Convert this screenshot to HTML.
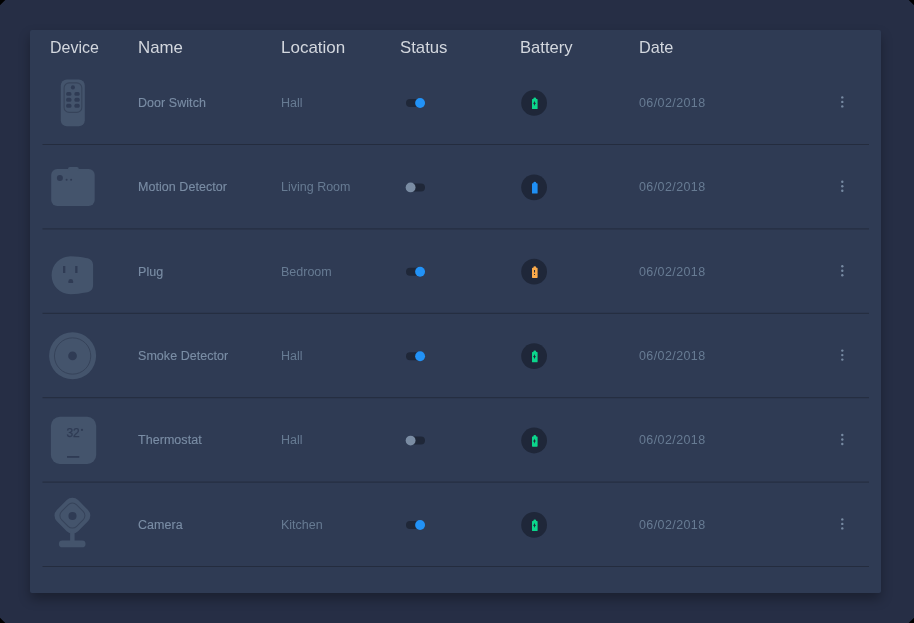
<!DOCTYPE html>
<html><head><meta charset="utf-8">
<style>
html,body{margin:0;padding:0;width:914px;height:623px;overflow:hidden;background:#000;}
*{box-sizing:border-box;}
.frame{will-change:transform;position:absolute;left:0;top:0;width:914px;height:623px;background:#262e45;clip-path:polygon(5.3px 0,908.7px 0,914px 5.3px,914px 617.7px,908.7px 623px,5.3px 623px,0 617.7px,0 5.3px);font-family:"Liberation Sans",sans-serif;}
.card{position:absolute;left:30px;top:30px;width:851px;height:563px;background:#2f3b54;border-radius:2px;box-shadow:0 6px 12px rgba(0,0,0,0.3);}
.h{position:absolute;top:38.3px;font-size:17px;color:#d3d7de;line-height:20px;white-space:nowrap;transform-origin:0 0;}
.t{position:absolute;font-size:12.5px;line-height:14px;white-space:nowrap;}
.nm{color:#7a8da5;letter-spacing:0.05px;-webkit-text-stroke:0.12px #7a8da5;}
.lc{color:#677b93;}
.dt{color:#677b93;letter-spacing:0.4px;}
.ic{position:absolute;left:0;top:0;}
</style></head><body>
<div class="frame">
<div class="card"></div>
<div class="h" style="left:50px;transform:scaleX(0.94)">Device</div>
<div class="h" style="left:138px;transform:scaleX(0.99)">Name</div>
<div class="h" style="left:281px;transform:scaleX(1.0)">Location</div>
<div class="h" style="left:400px;transform:scaleX(0.985)">Status</div>
<div class="h" style="left:520px;transform:scaleX(0.977)">Battery</div>
<div class="h" style="left:639px;transform:scaleX(0.957)">Date</div>
<svg class="ic" width="914" height="623" viewBox="0 0 914 623">
 <rect x="42.5" y="144.00" width="826.5" height="1" fill="#242c3e"/>
 <rect x="42.5" y="228.40" width="826.5" height="1" fill="#242c3e"/>
 <rect x="42.5" y="312.80" width="826.5" height="1" fill="#242c3e"/>
 <rect x="42.5" y="397.20" width="826.5" height="1" fill="#242c3e"/>
 <rect x="42.5" y="481.60" width="826.5" height="1" fill="#242c3e"/>
 <rect x="42.5" y="566.00" width="826.5" height="1" fill="#242c3e"/>
 <g fill="#44546c">
  <rect x="60.8" y="79.5" width="24" height="46.7" rx="6"/>
  <rect x="64.1" y="82.9" width="17.7" height="29.5" rx="5" fill="none" stroke="#36435a" stroke-width="1.1"/>
  <g fill="#2f3b54">
   <circle cx="72.9" cy="87.4" r="2.05"/>
   <rect x="66.2" y="91.9" width="5.2" height="3.95" rx="1.5"/>
   <rect x="74.45" y="91.9" width="5.2" height="3.95" rx="1.5"/>
   <rect x="66.2" y="97.85" width="5.2" height="3.95" rx="1.5"/>
   <rect x="74.45" y="97.85" width="5.2" height="3.95" rx="1.5"/>
   <rect x="66.2" y="103.8" width="5.2" height="3.95" rx="1.5"/>
   <rect x="74.45" y="103.8" width="5.2" height="3.95" rx="1.5"/>
  </g>
  <rect x="51.2" y="169" width="43.5" height="37" rx="6"/>
  <rect x="68" y="167" width="10.8" height="4" rx="2"/>
  <g fill="#2f3b54">
   <circle cx="59.9" cy="178" r="3"/>
   <circle cx="66.6" cy="179.7" r="1"/>
   <circle cx="71.1" cy="179.7" r="1"/>
  </g>
  <path d="M70.6 256.2 C60.1 256.2 51.6 264.7 51.6 275.2 C51.6 285.7 60.1 294.2 70.6 294.2 C76 294.2 81 293.3 86 292.5 C90.5 291.8 93.1 289.5 93.1 285 L93.1 265.4 C93.1 260.9 90.5 258.6 86 257.9 C81 257.1 76 256.2 70.6 256.2 Z"/>
  <g fill="#2f3b54">
   <rect x="63" y="266" width="2.3" height="7" />
   <rect x="75.2" y="266" width="2.3" height="7" />
   <path d="M68.4 283 L68.4 281.3 A2.35 2.35 0 0 1 73.1 281.3 L73.1 283 Z"/>
  </g>
  <circle cx="72.6" cy="355.8" r="23.5"/>
  <circle cx="72.6" cy="356" r="18.15" fill="none" stroke="#36435a" stroke-width="1"/>
  <circle cx="72.55" cy="355.95" r="4.35" fill="#2f3b54"/>
  <rect x="50.9" y="416.8" width="45.3" height="47.2" rx="9"/>
  <rect x="67" y="456" width="12.3" height="1.8" fill="#2f3b54"/>
  <g transform="translate(72.4 515.6) rotate(45)">
   <rect x="-15" y="-15" width="30" height="30" rx="8"/>
   <rect x="-10.6" y="-10.6" width="21.2" height="21.2" rx="6" fill="none" stroke="#36435a" stroke-width="1"/>
  </g>
  <circle cx="72.5" cy="516" r="4.05" fill="#2f3b54"/>
  <rect x="70.1" y="531" width="4.5" height="11"/>
  <rect x="58.9" y="540.6" width="26.6" height="6.7" rx="3.35"/>
 </g>
 <text x="66.4" y="436.8" font-family="Liberation Sans" font-size="12" fill="#2f3b54" stroke="#2f3b54" stroke-width="0.25">32</text>
 <circle cx="82" cy="429.9" r="1.05" fill="#2f3b54"/>
 <g transform="translate(0 0.00)">
  <rect x="406" y="99" width="19" height="8" rx="4" fill="#1f2738"/>
  <circle cx="420.1" cy="103" r="4.95" fill="#2292f6"/>
  <circle cx="534.1" cy="102.9" r="12.9" fill="#1f2739"/>
  <path fill="#0bd68c" d="M532.6 98.9h0.8v-0.5q0 -1 1.4 -1q1.4 0 1.4 1v0.5h0.8q0.6 0 0.6 0.6v9q0 0.6 -0.6 0.6h-4.4q-0.6 0 -0.6 -0.6v-9q0 -0.6 0.6 -0.6z"/>
  <path fill="#1f2739" d="M534.45 100.8Q534.7 103.1 535.95 103.45Q534.7 103.8 534.45 106.1Q534.2 103.8 533.1 103.35Q534.2 103.1 534.45 100.8Z"/>
  <g fill="#778aa2"><circle cx="842.3" cy="97.4" r="1.2"/><circle cx="842.3" cy="101.9" r="1.2"/><circle cx="842.3" cy="106.4" r="1.2"/></g>
 </g>
 <g transform="translate(0 84.40)">
  <rect x="406" y="99" width="19" height="8" rx="4" fill="#1f2738"/>
  <circle cx="410.6" cy="103" r="4.95" fill="#7a8ca3"/>
  <circle cx="534.1" cy="102.9" r="12.9" fill="#1f2739"/>
  <path fill="#1f8ff4" d="M532.6 98.9h0.8v-0.5q0 -1 1.4 -1q1.4 0 1.4 1v0.5h0.8q0.6 0 0.6 0.6v9q0 0.6 -0.6 0.6h-4.4q-0.6 0 -0.6 -0.6v-9q0 -0.6 0.6 -0.6z"/>
  <g fill="#778aa2"><circle cx="842.3" cy="97.4" r="1.2"/><circle cx="842.3" cy="101.9" r="1.2"/><circle cx="842.3" cy="106.4" r="1.2"/></g>
 </g>
 <g transform="translate(0 168.80)">
  <rect x="406" y="99" width="19" height="8" rx="4" fill="#1f2738"/>
  <circle cx="420.1" cy="103" r="4.95" fill="#2292f6"/>
  <circle cx="534.1" cy="102.9" r="12.9" fill="#1f2739"/>
  <path fill="#fbaa4a" d="M532.6 98.9h0.8v-0.5q0 -1 1.4 -1q1.4 0 1.4 1v0.5h0.8q0.6 0 0.6 0.6v9q0 0.6 -0.6 0.6h-4.4q-0.6 0 -0.6 -0.6v-9q0 -0.6 0.6 -0.6z"/>
  <path fill="#1f2739" d="M534.05 101.1h1v2.6h-1zM534.05 105.2h1v1h-1z"/>
  <g fill="#778aa2"><circle cx="842.3" cy="97.4" r="1.2"/><circle cx="842.3" cy="101.9" r="1.2"/><circle cx="842.3" cy="106.4" r="1.2"/></g>
 </g>
 <g transform="translate(0 253.20)">
  <rect x="406" y="99" width="19" height="8" rx="4" fill="#1f2738"/>
  <circle cx="420.1" cy="103" r="4.95" fill="#2292f6"/>
  <circle cx="534.1" cy="102.9" r="12.9" fill="#1f2739"/>
  <path fill="#0bd68c" d="M532.6 98.9h0.8v-0.5q0 -1 1.4 -1q1.4 0 1.4 1v0.5h0.8q0.6 0 0.6 0.6v9q0 0.6 -0.6 0.6h-4.4q-0.6 0 -0.6 -0.6v-9q0 -0.6 0.6 -0.6z"/>
  <path fill="#1f2739" d="M534.45 100.8Q534.7 103.1 535.95 103.45Q534.7 103.8 534.45 106.1Q534.2 103.8 533.1 103.35Q534.2 103.1 534.45 100.8Z"/>
  <g fill="#778aa2"><circle cx="842.3" cy="97.4" r="1.2"/><circle cx="842.3" cy="101.9" r="1.2"/><circle cx="842.3" cy="106.4" r="1.2"/></g>
 </g>
 <g transform="translate(0 337.60)">
  <rect x="406" y="99" width="19" height="8" rx="4" fill="#1f2738"/>
  <circle cx="410.6" cy="103" r="4.95" fill="#7a8ca3"/>
  <circle cx="534.1" cy="102.9" r="12.9" fill="#1f2739"/>
  <path fill="#0bd68c" d="M532.6 98.9h0.8v-0.5q0 -1 1.4 -1q1.4 0 1.4 1v0.5h0.8q0.6 0 0.6 0.6v9q0 0.6 -0.6 0.6h-4.4q-0.6 0 -0.6 -0.6v-9q0 -0.6 0.6 -0.6z"/>
  <path fill="#1f2739" d="M534.45 100.8Q534.7 103.1 535.95 103.45Q534.7 103.8 534.45 106.1Q534.2 103.8 533.1 103.35Q534.2 103.1 534.45 100.8Z"/>
  <g fill="#778aa2"><circle cx="842.3" cy="97.4" r="1.2"/><circle cx="842.3" cy="101.9" r="1.2"/><circle cx="842.3" cy="106.4" r="1.2"/></g>
 </g>
 <g transform="translate(0 422.00)">
  <rect x="406" y="99" width="19" height="8" rx="4" fill="#1f2738"/>
  <circle cx="420.1" cy="103" r="4.95" fill="#2292f6"/>
  <circle cx="534.1" cy="102.9" r="12.9" fill="#1f2739"/>
  <path fill="#0bd68c" d="M532.6 98.9h0.8v-0.5q0 -1 1.4 -1q1.4 0 1.4 1v0.5h0.8q0.6 0 0.6 0.6v9q0 0.6 -0.6 0.6h-4.4q-0.6 0 -0.6 -0.6v-9q0 -0.6 0.6 -0.6z"/>
  <path fill="#1f2739" d="M534.45 100.8Q534.7 103.1 535.95 103.45Q534.7 103.8 534.45 106.1Q534.2 103.8 533.1 103.35Q534.2 103.1 534.45 100.8Z"/>
  <g fill="#778aa2"><circle cx="842.3" cy="97.4" r="1.2"/><circle cx="842.3" cy="101.9" r="1.2"/><circle cx="842.3" cy="106.4" r="1.2"/></g>
 </g>
</svg>
<div class="t nm" style="left:138px;top:95.70px">Door Switch</div>
<div class="t lc" style="left:281px;top:95.70px">Hall</div>
<div class="t dt" style="left:639px;top:95.70px">06/02/2018</div>
<div class="t nm" style="left:138px;top:180.10px">Motion Detector</div>
<div class="t lc" style="left:281px;top:180.10px">Living Room</div>
<div class="t dt" style="left:639px;top:180.10px">06/02/2018</div>
<div class="t nm" style="left:138px;top:264.50px">Plug</div>
<div class="t lc" style="left:281px;top:264.50px">Bedroom</div>
<div class="t dt" style="left:639px;top:264.50px">06/02/2018</div>
<div class="t nm" style="left:138px;top:348.90px">Smoke Detector</div>
<div class="t lc" style="left:281px;top:348.90px">Hall</div>
<div class="t dt" style="left:639px;top:348.90px">06/02/2018</div>
<div class="t nm" style="left:138px;top:433.30px">Thermostat</div>
<div class="t lc" style="left:281px;top:433.30px">Hall</div>
<div class="t dt" style="left:639px;top:433.30px">06/02/2018</div>
<div class="t nm" style="left:138px;top:517.70px">Camera</div>
<div class="t lc" style="left:281px;top:517.70px">Kitchen</div>
<div class="t dt" style="left:639px;top:517.70px">06/02/2018</div>
</div>
</body></html>
